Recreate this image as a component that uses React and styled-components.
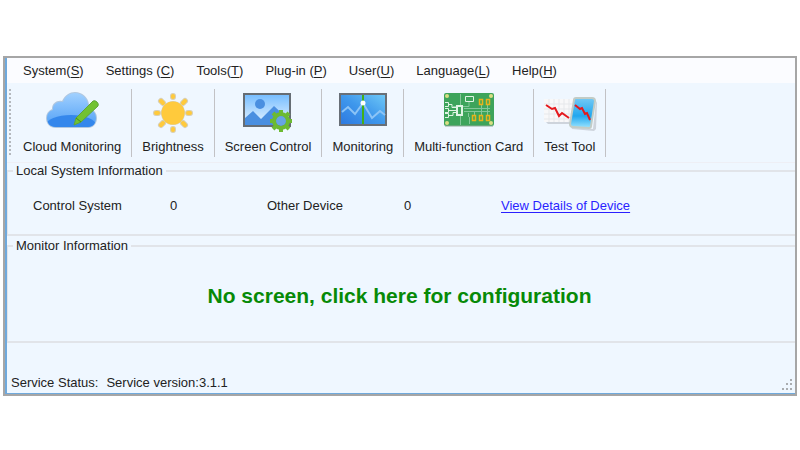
import React from 'react';
import styled, { createGlobalStyle } from 'styled-components';

const GlobalStyle = createGlobalStyle`
  * {
    box-sizing: border-box;
  }

  body {
    margin: 0;
    background: #fff;
    color: #222;
    font: 13px/16px 'Liberation Sans', Arial, sans-serif;
  }

  button {
    padding: 0;
    border: 0;
    background: none;
    color: inherit;
    font: inherit;
    cursor: pointer;
  }
`;

const Page = styled.div`
  padding: 56px 3px;
`;

const Window = styled.main`
  border: 2px solid #a6a6a6;
  background: #eff7ff;
`;

const WindowFrame = styled.div`
  border-left: 2px solid #6fa9dc;
  border-bottom: 1px solid #6fa9dc;
`;

const MenuBar = styled.nav`
  display: flex;
  align-items: center;
  gap: 22px;
  height: 25px;
  padding: 0 16px;
  background: #fbfcff;
`;

const MenuItem = styled.button`
  white-space: nowrap;

  u {
    text-underline-offset: 2px;
  }
`;

const Toolbar = styled.div`
  display: flex;
  padding: 6px 2px 5px;
  border-bottom: 1px solid #eeeff5;
`;

const Handle = styled.div`
  width: 2px;
  margin-right: 2px;
  background: repeating-linear-gradient(#b4b8bd 0 2px, transparent 2px 4px);
`;

const ToolButton = styled.button`
  display: flex;
  flex-direction: column;
  align-items: center;
  justify-content: space-between;
  height: 68px;
  padding: 0 10px 2px;
  border-right: 1px solid #c2c2c5;

  svg {
    display: block;
    margin: 3px -2px 0;
  }
`;

const Group = styled.fieldset`
  min-width: 0;
  margin: 0 0 2px;
  padding: 0;
  border: solid #e1e4e9;
  border-width: 2px 0 2px 1px;
`;

const Legend = styled.legend`
  margin-left: 5px;
  padding: 0 3px;
`;

const DeviceRow = styled.div`
  display: grid;
  grid-template-columns: 137px 97px 137px 97px 1fr;
  padding: 19px 0 20px 25px;
`;

const DetailsLink = styled.a`
  justify-self: start;
  color: #2a1fff;
  text-underline-offset: 2px;
`;

const ScreenNotice = styled.button`
  display: block;
  width: 100%;
  padding: 30px 4px 33px 0;
  color: #078a07;
  font-size: 21px;
  font-weight: bold;
  line-height: 24px;
`;

const StatusBar = styled.footer`
  display: flex;
  align-items: flex-end;
  gap: 8px;
  height: 48px;
  padding: 0 2px 2px 4px;

  svg {
    margin-left: auto;
  }
`;

function CloudIcon() {
  return (
    <svg width="54" height="38" viewBox="0 0 54 38" aria-hidden="true">
      <defs>
        <linearGradient id="cloud" x2="0" y2="1">
          <stop offset="0" stopColor="#a3d2ff" />
          <stop offset="1" stopColor="#4a9bf5" />
        </linearGradient>
        <clipPath id="cloudShape">
          <path d="M11 35C5 35 2 31 2 26c0-4 2-7 6-8-1-6 5-9 10-8C20 4 25 1 30 1c7 0 12 5 13 11l1 5c5 1 7 5 7 9 0 5-3 9-8 9z" />
        </clipPath>
      </defs>
      <path
        d="M11 36C5 36 1 32 1 26c0-4 2-7 6-9 0-6 5-9 10-8C20 3 25 0 30 0c7 0 13 5 14 12l1 5c5 1 7 5 7 9 0 6-4 10-9 10z"
        fill="#7da0c4"
        opacity="0.55"
      />
      <g clipPath="url(#cloudShape)">
        <path d="M0 0h54v38H0z" fill="url(#cloud)" />
        <ellipse cx="26" cy="33" rx="25" ry="10" fill="#3487ec" />
      </g>
      <path
        d="M29 33l2-7L48 9q2-1 4 1 2 2 1 4L36 30z"
        fill="#72c232"
        stroke="#5fa53a"
      />
      <path d="M31 26l5 4" fill="none" stroke="#418b20" />
    </svg>
  );
}

function SunIcon() {
  return (
    <svg width="42" height="42" viewBox="0 0 42 42" aria-hidden="true">
      <g fill="none" strokeLinecap="round">
        <path
          d="M21 4v1M21 37v1M4 21h2M36 21h2M9 9l2 2M31 11l2-2M9 33l2-2M31 31l2 2"
          stroke="#d8cfb4"
          strokeWidth="6"
        />
        <path
          d="M21 4v1M21 37v1M4 21h2M36 21h2M9 9l2 2M31 11l2-2M9 33l2-2M31 31l2 2"
          stroke="#ffca3c"
          strokeWidth="4"
        />
      </g>
      <circle cx="21" cy="21" r="12" fill="#d8cfb4" />
      <circle cx="21" cy="21" r="11.5" fill="#ffca3c" />
    </svg>
  );
}

function ScreenIcon() {
  return (
    <svg width="54" height="42" viewBox="0 0 54 42" aria-hidden="true">
      <defs>
        <linearGradient id="sky" x2="0" y2="1">
          <stop offset="0" stopColor="#74bcff" />
          <stop offset="1" stopColor="#edf7ff" />
        </linearGradient>
      </defs>
      <path d="M3 2h46v32H3z" fill="url(#sky)" stroke="#666d74" strokeWidth="2" />
      <path d="M4 26l8-7 8 8 13-13 15 14v5H4z" fill="#4a8fe0" />
      <circle cx="19" cy="12" r="5" fill="#4a8fe0" />
      <circle cx="40" cy="29" r="5" fill="#67a4e5" />
      <g fill="none" stroke="#6cba32" strokeWidth="4">
        <circle cx="40" cy="29" r="7" />
        <path d="M40 18v4M40 36v4M29 29h4M47 29h4M32 21l3 3M45 34l3 3M48 21l-3 3M35 34l-3 3" />
      </g>
    </svg>
  );
}

function MonitoringIcon() {
  return (
    <svg width="50" height="36" viewBox="0 0 50 36" aria-hidden="true">
      <defs>
        <linearGradient id="display" x1="0" y1="1" x2="1" y2="0">
          <stop offset="0" stopColor="#2c78df" />
          <stop offset="0.5" stopColor="#3f98ec" />
          <stop offset="1" stopColor="#70caf7" />
        </linearGradient>
      </defs>
      <path
        d="M2 2h46v31H2z"
        fill="url(#display)"
        stroke="#686f77"
        strokeWidth="2"
      />
      <path
        d="M4 20l6-5 7 7 8-11 9 15 8-7 5 4"
        fill="none"
        stroke="#8cc4f6"
        strokeWidth="2"
      />
      <path d="M24 3h2v29h-2z" fill="#42b018" />
      <circle cx="25" cy="11" r="2.5" fill="#fff" />
    </svg>
  );
}

function CardIcon() {
  return (
    <svg width="52" height="36" viewBox="0 0 52 36" aria-hidden="true">
      <rect x="1" y="1" width="50" height="33" rx="2" fill="#3da45b" />
      <path d="M2 34h48" stroke="#91aa9b" />
      <g fill="none" stroke="#82c799">
        <path d="M17.5 2v13M17.5 23v10M21 16.5h26M21 19.5h26M20 14.5h6V9M25.5 21v4M38.5 13v10M44.5 13v10M31.5 19v4M8 18.5h7M10 14.5h5M26.5 25v7" />
      </g>
      <g fill="none" stroke="#dff4e4">
        <path d="M22.5 4.5h8v5h-8zM2 10.5h3.5v4H2M2 16.5h3.5v4H2M2 21.5h3.5v4H2M6 12.5h3v3h5M6 18.5h8M6 23.5h4v-3h4" />
        <path d="M14 14h5v9h-5z" strokeWidth="2" />
      </g>
      <path
        d="M36.5 7.5h3v5h-3zM43.5 7.5h3v5h-3zM29.5 23.5h3v5h-3zM36.5 23.5h3v5h-3zM43.5 23.5h3v5h-3z"
        fill="none"
        stroke="#e8b31a"
        strokeWidth="1.5"
      />
      <g fill="#d9de83">
        <circle cx="4" cy="4" r="2" />
        <circle cx="48" cy="4" r="2" />
        <circle cx="4" cy="31" r="2" />
        <circle cx="48" cy="31" r="2" />
      </g>
    </svg>
  );
}

function TestIcon() {
  return (
    <svg width="54" height="40" viewBox="0 0 54 40" aria-hidden="true">
      <defs>
        <linearGradient id="tile" x2="0" y2="1">
          <stop offset="0" stopColor="#75caf5" />
          <stop offset="0.6" stopColor="#21a7ef" />
          <stop offset="1" stopColor="#9ce5ff" />
        </linearGradient>
      </defs>
      <path d="M3 30h25l2 5 20 2 3-28 1 2-1 26-2 2-22-2-2-5H5z" fill="#b7bdc4" opacity="0.6" />
      <path d="M1 7h30v23H1z" fill="#f8f8f9" />
      <path
        d="M1 12h28M1 17h28M1 22h28M1 27h28M6 7v23M11 7v23M16 7v23M21 7v23M26 7v23"
        stroke="#e6e8eb"
      />
      <path
        d="M33 6h16q3 0 3 3l-4 25q0 2-2 2l-16-1q-3 0-3-3l4-24q0-2 2-2z"
        fill="url(#tile)"
        stroke="#c2ccc6"
        strokeWidth="2"
      />
      <path
        d="M3 13l6 4 3-1 4 8 3-3 7 5M32 13l5 4 2-1 3 6 2-1 3 7"
        fill="none"
        stroke="#e5191e"
        strokeWidth="2"
      />
    </svg>
  );
}

function ResizeGrip() {
  return (
    <svg width="12" height="12" viewBox="0 0 12 12" aria-hidden="true">
      <path
        d="M9 0h2v2H9zM5 4h2v2H5zM9 4h2v2H9zM1 9h2v2H1zM5 9h2v2H5zM9 9h2v2H9z"
        fill="#aaadb0"
      />
    </svg>
  );
}

const menus = [
  { label: 'System', shortcut: 'S' },
  { label: 'Settings ', shortcut: 'C' },
  { label: 'Tools', shortcut: 'T' },
  { label: 'Plug-in ', shortcut: 'P' },
  { label: 'User', shortcut: 'U' },
  { label: 'Language', shortcut: 'L' },
  { label: 'Help', shortcut: 'H' },
];

const tools = [
  { label: 'Cloud Monitoring', Icon: CloudIcon },
  { label: 'Brightness', Icon: SunIcon },
  { label: 'Screen Control', Icon: ScreenIcon },
  { label: 'Monitoring', Icon: MonitoringIcon },
  { label: 'Multi-function Card', Icon: CardIcon },
  { label: 'Test Tool', Icon: TestIcon },
];

function App() {
  return (
    <Page>
      <GlobalStyle />
      <Window>
        <WindowFrame>
          <MenuBar>
            {menus.map(({ label, shortcut }) => (
              <MenuItem key={label} type="button">
                {label}(<u>{shortcut}</u>)
              </MenuItem>
            ))}
          </MenuBar>
          <Toolbar role="toolbar">
            <Handle />
            {tools.map(({ label, Icon }) => (
              <ToolButton key={label} type="button">
                <Icon />
                <span>{label}</span>
              </ToolButton>
            ))}
          </Toolbar>
          <Group>
            <Legend>Local System Information</Legend>
            <DeviceRow>
              <span>Control System</span>
              <span>0</span>
              <span>Other Device</span>
              <span>0</span>
              <DetailsLink href="#devices">View Details of Device</DetailsLink>
            </DeviceRow>
          </Group>
          <Group>
            <Legend>Monitor Information</Legend>
            <ScreenNotice type="button">
              No screen, click here for configuration
            </ScreenNotice>
          </Group>
          <StatusBar>
            <span>Service Status:</span>
            <span>Service version:3.1.1</span>
            <ResizeGrip />
          </StatusBar>
        </WindowFrame>
      </Window>
    </Page>
  );
}

export default App;
